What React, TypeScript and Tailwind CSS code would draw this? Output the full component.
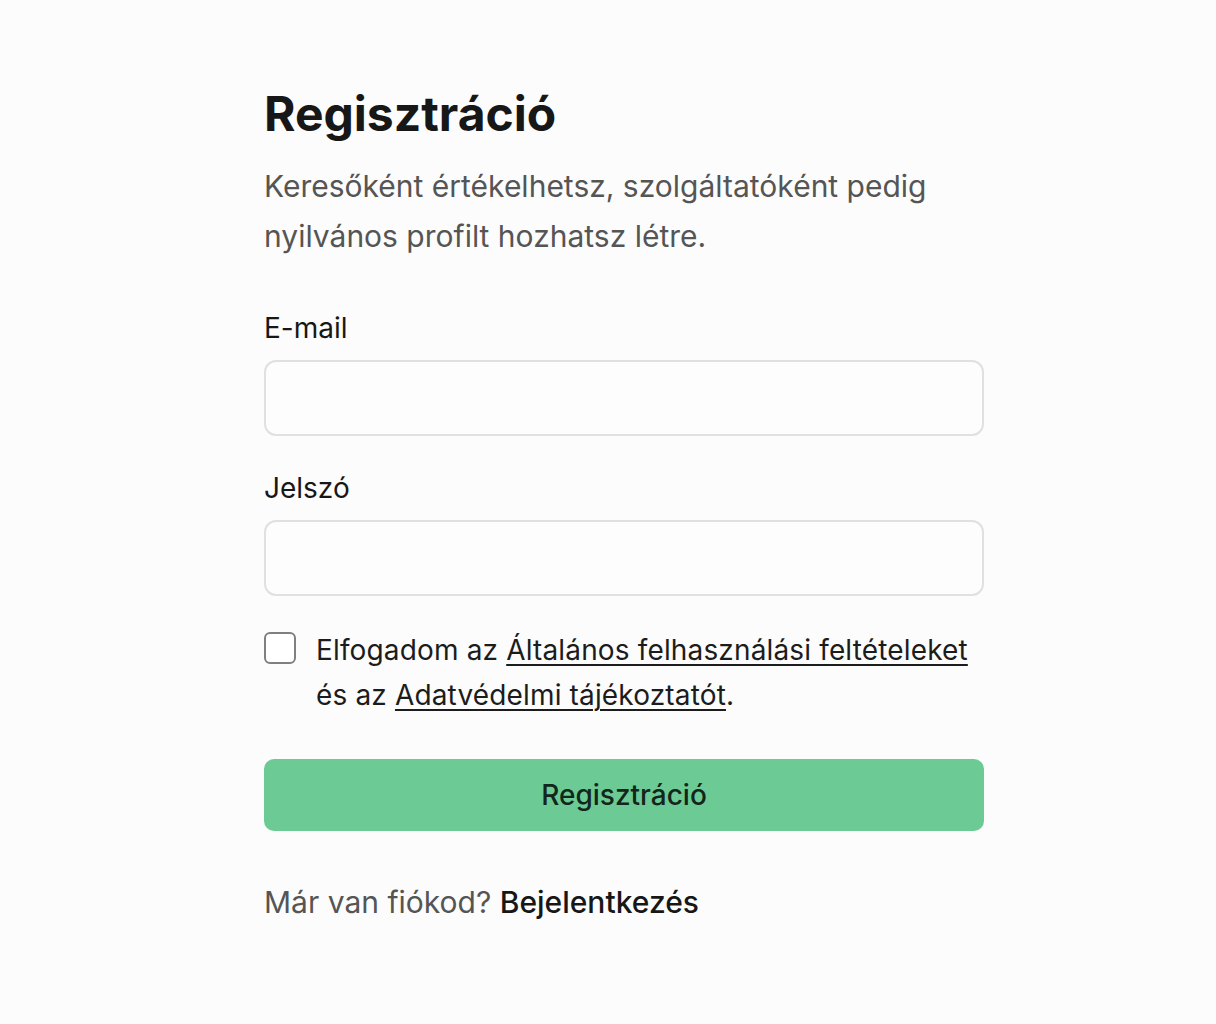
export default function App() {
  return (
    <div className="min-h-screen w-full bg-[#fcfcfc] font-['Inter',sans-serif] text-[#171717]">
      <div className="ml-[264px] w-[720px] pt-[84px]">
        <h1 className="text-[48px] font-bold leading-[60px]">Regisztráció</h1>
        <p className="mt-[17px] text-[30px] leading-[50px] text-[#555555]">
          Keresőként értékelhetsz, szolgáltatóként pedig nyilvános profilt hozhatsz létre.
        </p>

        <form className="mt-[49px] flex flex-col" onSubmit={(e) => e.preventDefault()}>
          <label className="text-[28px] leading-[36px]">E-mail</label>
          <input
            type="email"
            className="mt-[14px] h-[76px] w-full rounded-[12px] border-2 border-[#e0e0e0] bg-[#fdfdfd] px-5 text-[28px] outline-none"
          />

          <label className="mt-[34px] text-[28px] leading-[36px]">Jelszó</label>
          <input
            type="password"
            className="mt-[14px] h-[76px] w-full rounded-[12px] border-2 border-[#e0e0e0] bg-[#fdfdfd] px-5 text-[28px] outline-none"
          />

          <div className="mt-[32px] flex items-start gap-[20px]">
            <span className="mt-[4px] h-[32px] w-[32px] shrink-0 rounded-[6px] border-2 border-[#808080] bg-white" />
            <p className="text-[28px] leading-[45px] tracking-[0.15px] text-[#1c1c1c]">
              Elfogadom az{" "}
              <a href="#" className="underline decoration-2 underline-offset-4">
                Általános felhasználási feltételeket
              </a>{" "}
              és az{" "}
              <a href="#" className="underline decoration-2 underline-offset-4">
                Adatvédelmi tájékoztatót
              </a>
              .
            </p>
          </div>

          <button
            type="submit"
            className="mt-[41px] h-[72px] w-full rounded-[10px] bg-[#6ccb95] text-[28px] font-medium text-[#13261b]"
          >
            Regisztráció
          </button>
        </form>

        <p className="mt-[51px] text-[30px] leading-[40px] text-[#555555]">
          Már van fiókod? <a href="#" className="font-medium text-[#171717]">Bejelentkezés</a>
        </p>
      </div>
    </div>
  );
}
